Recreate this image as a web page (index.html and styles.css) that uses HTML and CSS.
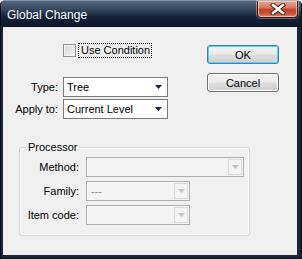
FILE: index.html
```html
<!doctype html>
<html>
<head>
    <meta charset="UTF-8">
    <title>Global Change</title>
    <link rel="stylesheet" href="styles.css">
</head>
<body>
    <div class="window">
        <div class="titlebar">
            <span class="title">Global Change</span>
            <span class="close">
                <svg width="16" height="12" viewBox="0 0 16 12">
                    <path d="M3 2 L13 10 M13 2 L3 10" stroke="#4a2418" stroke-width="4.5" stroke-linecap="square"/>
                    <path d="M3 2 L13 10 M13 2 L3 10" stroke="#ffffff" stroke-width="2.5" stroke-linecap="square"/>
                </svg>
            </span>
        </div>
        <div class="client">
            <div class="top">
                <div class="options">
                    <label class="check">
                        <span class="box"></span>
                        <span class="focus">Use Condition</span>
                    </label>
                    <div class="fields">
                        <span class="lbl">Type:</span>
                        <div class="combo">
                            <span class="value">Tree</span>
                            <svg class="arrow" width="7" height="4" viewBox="0 0 7 4"><polygon points="0,0 7,0 3.5,4" fill="#14206a"/></svg>
                        </div>
                        <span class="lbl">Apply to:</span>
                        <div class="combo">
                            <span class="value">Current Level</span>
                            <svg class="arrow" width="7" height="4" viewBox="0 0 7 4"><polygon points="0,0 7,0 3.5,4" fill="#14206a"/></svg>
                        </div>
                    </div>
                </div>
                <div class="buttons">
                    <button class="btn default">OK</button>
                    <button class="btn">Cancel</button>
                </div>
            </div>

            <fieldset class="group">
                <legend>Processor</legend>
                <div class="sub-fields">
                    <span class="lbl">Method:</span>
                    <div class="combo disabled wide">
                        <span class="value"></span>
                        <span class="drop"><svg width="7" height="4" viewBox="0 0 7 4"><polygon points="0,0 7,0 3.5,4" fill="#c4c4c4"/></svg></span>
                    </div>
                    <span class="lbl">Family:</span>
                    <div class="combo disabled">
                        <span class="value">---</span>
                        <span class="drop"><svg width="7" height="4" viewBox="0 0 7 4"><polygon points="0,0 7,0 3.5,4" fill="#c4c4c4"/></svg></span>
                    </div>
                    <span class="lbl">Item code:</span>
                    <div class="combo disabled">
                        <span class="value"></span>
                        <span class="drop"><svg width="7" height="4" viewBox="0 0 7 4"><polygon points="0,0 7,0 3.5,4" fill="#c4c4c4"/></svg></span>
                    </div>
                </div>
            </fieldset>
        </div>
    </div>
</body>
</html>
```

FILE: styles.css
```css
body {
    margin: 0;
    font-family: "Liberation Sans", Arial, sans-serif;
    font-size: 11px;
    color: #000;
}
.window {
    width: 302px;
    height: 259px;
    box-sizing: border-box;
    display: flex;
    flex-direction: column;
    background: #1a2637;
    border: 1px solid #0a0f18;
    border-top-color: #8593a6;
    border-radius: 5px 5px 0 0;
}
.titlebar {
    height: 26px;
    display: flex;
    align-items: flex-start;
    justify-content: space-between;
    padding: 0 3px 0 6px;
    background: linear-gradient(#56677d 0%, #34445a 35%, #15223a 60%, #0c1628 100%);
    border-radius: 4px 4px 0 0;
}
.title {
    color: #fff;
    font-size: 12px;
    line-height: 12px;
    margin-top: 8px;
}
.close {
    width: 41px;
    height: 17px;
    margin-top: 0;
    display: flex;
    align-items: center;
    justify-content: center;
    box-sizing: border-box;
    border: 1px solid #3b1a14;
    border-top: none;
    border-radius: 0 0 4px 4px;
    background: linear-gradient(#e9a794 0%, #d77a62 40%, #c0432a 55%, #c9563c 80%, #e08a6e 100%);
    box-shadow: inset 0 0 0 1px rgba(255, 220, 200, 0.6), 0 0 0 1px rgba(255, 255, 255, 0.35);
}
.client {
    flex: 1;
    margin: 0 4px 3px 2px;
    background: #f0f0f0;
}
.top {
    display: flex;
}
.options {
    width: 165px;
    padding-top: 15px;
}
.check {
    display: flex;
    align-items: center;
    height: 16px;
    margin-left: 60px;
    gap: 2px;
}
.box {
    width: 11px;
    height: 11px;
    border: 1px solid #8e8f8f;
    background: linear-gradient(135deg, #d8d8d8, #f6f6f6);
    box-shadow: inset 0 0 0 1px #f4f4f4;
}
.focus {
    border: 1px dotted #000;
    padding: 0 1px 0 2px;
    line-height: 13px;
}
.fields {
    display: grid;
    grid-template-columns: 55px 105px;
    column-gap: 5px;
    row-gap: 2px;
    margin-top: 19px;
    align-items: center;
}
.lbl {
    text-align: right;
    white-space: nowrap;
}
.combo {
    height: 20px;
    box-sizing: border-box;
    display: flex;
    align-items: center;
    justify-content: space-between;
    border: 1px solid #7a7a7a;
    background: #fff;
    padding: 0 5px 0 3px;
}
.buttons {
    margin-left: 39px;
    padding-top: 18px;
    display: flex;
    flex-direction: column;
    gap: 9px;
}
.btn {
    width: 72px;
    height: 19px;
    padding: 0;
    font-family: inherit;
    font-size: 11px;
    color: #000;
    border: 1px solid #707070;
    border-radius: 3px;
    background: linear-gradient(#f2f2f2 0%, #ebebeb 48%, #dddddd 52%, #cfcfcf 100%);
    box-shadow: inset 0 0 0 1px #fcfcfc;
}
.btn.default {
    border-color: #3c7fb1;
    box-shadow: inset 0 0 0 1px #48d5fb;
}
.group {
    width: 231px;
    box-sizing: border-box;
    margin: 22px 0 0 16px;
    padding: 3px 4px 10px 4px;
    border: 1px solid #d5d5d5;
    border-radius: 3px;
    box-shadow: inset 0 0 0 1px #fff;
}
.group legend {
    padding: 0 2px;
    margin-left: 2px;
    line-height: 13px;
}
.sub-fields {
    display: grid;
    grid-template-columns: 55px auto;
    column-gap: 7px;
    row-gap: 4px;
    align-items: center;
    justify-items: start;
}
.sub-fields .lbl {
    justify-self: end;
}
.combo.disabled {
    width: 104px;
    border-color: #adadad;
    background: #f4f4f4;
    padding: 1px;
    color: #8d8d8d;
}
.combo.disabled.wide {
    width: 158px;
}
.combo.disabled .value {
    padding-left: 3px;
}
.drop {
    width: 14px;
    height: 16px;
    box-sizing: border-box;
    display: flex;
    align-items: center;
    justify-content: center;
    border: 1px solid #dadada;
    background: #f4f4f4;
}
```
